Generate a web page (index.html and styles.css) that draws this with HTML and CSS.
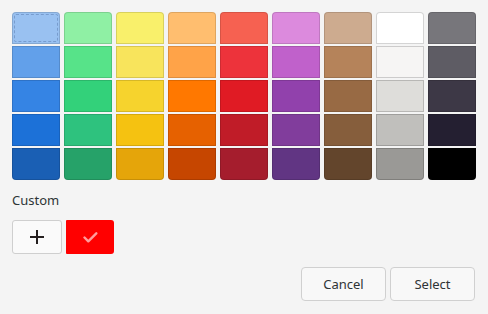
FILE: index.html
```html
<!DOCTYPE html>
<html lang="en">
<head>
  <meta charset="UTF-8">
  <title>Select a Color</title>
  <link rel="stylesheet" href="styles.css">
</head>
<body>

  <div class="palette">
    <!-- blue -->
    <div class="swatch focused" style="background:#99c1f1"></div>
    <div class="swatch" style="background:#62a0ea"></div>
    <div class="swatch" style="background:#3584e4"></div>
    <div class="swatch" style="background:#1c71d8"></div>
    <div class="swatch" style="background:#1a5fb4"></div>
    <!-- green -->
    <div class="swatch" style="background:#8ff0a4"></div>
    <div class="swatch" style="background:#57e389"></div>
    <div class="swatch" style="background:#33d17a"></div>
    <div class="swatch" style="background:#2ec27e"></div>
    <div class="swatch" style="background:#26a269"></div>
    <!-- yellow -->
    <div class="swatch" style="background:#f9f06b"></div>
    <div class="swatch" style="background:#f8e45c"></div>
    <div class="swatch" style="background:#f6d32d"></div>
    <div class="swatch" style="background:#f5c211"></div>
    <div class="swatch" style="background:#e5a50a"></div>
    <!-- orange -->
    <div class="swatch" style="background:#ffbe6f"></div>
    <div class="swatch" style="background:#ffa348"></div>
    <div class="swatch" style="background:#ff7800"></div>
    <div class="swatch" style="background:#e66100"></div>
    <div class="swatch" style="background:#c64600"></div>
    <!-- red -->
    <div class="swatch" style="background:#f66151"></div>
    <div class="swatch" style="background:#ed333b"></div>
    <div class="swatch" style="background:#e01b24"></div>
    <div class="swatch" style="background:#c01c28"></div>
    <div class="swatch" style="background:#a51d2d"></div>
    <!-- purple -->
    <div class="swatch" style="background:#dc8add"></div>
    <div class="swatch" style="background:#c061cb"></div>
    <div class="swatch" style="background:#9141ac"></div>
    <div class="swatch" style="background:#813d9c"></div>
    <div class="swatch" style="background:#613583"></div>
    <!-- brown -->
    <div class="swatch" style="background:#cdab8f"></div>
    <div class="swatch" style="background:#b5835a"></div>
    <div class="swatch" style="background:#986a44"></div>
    <div class="swatch" style="background:#865e3c"></div>
    <div class="swatch" style="background:#63452c"></div>
    <!-- light -->
    <div class="swatch light" style="background:#ffffff"></div>
    <div class="swatch light" style="background:#f6f5f4"></div>
    <div class="swatch light" style="background:#deddda"></div>
    <div class="swatch light" style="background:#c0bfbc"></div>
    <div class="swatch light" style="background:#9a9996"></div>
    <!-- dark -->
    <div class="swatch" style="background:#77767b"></div>
    <div class="swatch" style="background:#5e5c64"></div>
    <div class="swatch" style="background:#3d3846"></div>
    <div class="swatch" style="background:#241f31"></div>
    <div class="swatch" style="background:#000000"></div>
  </div>

  <div class="custom-label">Custom</div>

  <div class="custom-row">
    <button class="add-btn" type="button" aria-label="Add custom color">
      <svg width="14" height="14" viewBox="0 0 14 14">
        <path d="M7 0v14M0 7h14" stroke="#241f1f" stroke-width="2" fill="none"/>
      </svg>
    </button>
    <div class="custom-swatch" style="background:#ff0000">
      <svg width="15" height="12" viewBox="0 0 15 12">
        <path d="M1.5 6.5l3.8 3.8 8-8" stroke="#ff9c9c" stroke-width="2.4" fill="none" stroke-linecap="round" stroke-linejoin="round"/>
      </svg>
    </div>
  </div>

  <div class="actions">
    <button type="button">Cancel</button>
    <button type="button">Select</button>
  </div>

</body>
</html>
```

FILE: styles.css
```css
* {
  box-sizing: border-box;
}

body {
  font-family: "Noto Sans", "Open Sans", sans-serif;
  font-size: 13px;
  color: #2e3436;
  background: #f4f4f4;
  margin: 0;
  padding: 12px;
}

.palette {
  display: grid;
  grid-template-columns: repeat(9, 48px);
  grid-template-rows: repeat(5, 32px);
  grid-auto-flow: column;
  column-gap: 4px;
  row-gap: 2px;
}

.swatch {
  position: relative;
  box-shadow: inset 0 0 0 1px rgba(0,0,0,0.13);
}

.swatch.light {
  box-shadow: inset 0 0 0 1px rgba(0,0,0,0.17);
}

.swatch:nth-child(5n+1) {
  border-radius: 4px 4px 0 0;
}

.swatch:nth-child(5n) {
  border-radius: 0 0 4px 4px;
}

.swatch.focused::after {
  content: "";
  position: absolute;
  inset: 2px 2px 2px 2px;
  border: 1px dashed rgba(60,90,140,0.35);
  border-radius: 2px;
}

.custom-label {
  margin-top: 11px;
  line-height: 18px;
}

.custom-row {
  display: flex;
  gap: 4px;
  margin-top: 11px;
}

.add-btn {
  width: 50px;
  height: 34px;
  display: flex;
  align-items: center;
  justify-content: center;
  background: #fafafa;
  border: 1px solid #cfcfcf;
  border-radius: 3px;
  padding: 0;
}

.custom-swatch {
  width: 48px;
  height: 34px;
  display: flex;
  align-items: center;
  justify-content: center;
  border-radius: 1px 3px 3px 1px;
}

.actions {
  display: flex;
  justify-content: flex-end;
  gap: 4px;
  margin-top: 13px;
  padding-right: 1px;
}

.actions button {
  width: 85px;
  height: 34px;
  font-family: inherit;
  font-size: 13px;
  color: #2e3436;
  background: #f8f8f8;
  border: 1px solid #d0d0d0;
  border-radius: 4px;
}
```
